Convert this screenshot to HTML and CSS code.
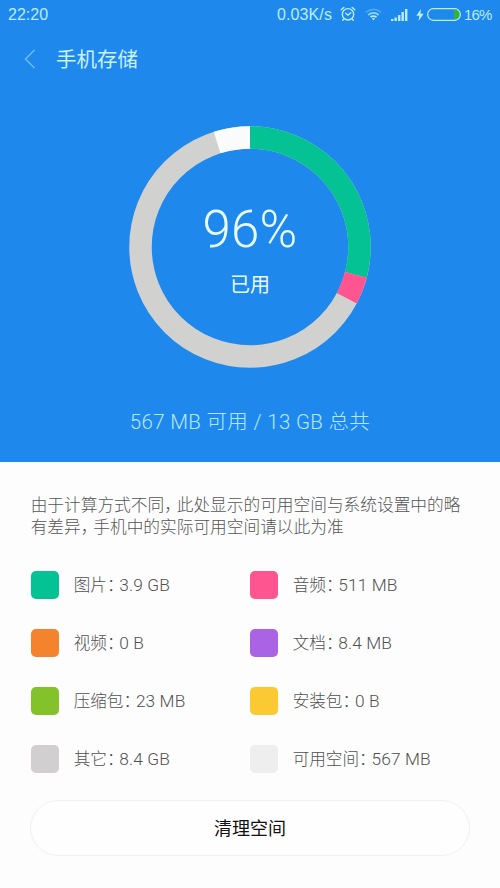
FILE: index.html
```html
<!DOCTYPE html>
<html lang="zh-CN">
<head>
<meta charset="utf-8">
<title>手机存储</title>
<link rel="stylesheet" href="styles.css">
</head>
<body>
<section class="hero">
  <div class="status">
    <span class="time">22:20</span>
    <span class="speed">0.03K/s</span>
    <svg class="alarm" width="16" height="16" viewBox="0 0 16 16" fill="none" stroke="currentColor" stroke-width="1.4" stroke-linecap="round"><circle cx="8" cy="8.3" r="5.7"/><path d="M1.2 3.7 3.8 1.5M14.8 3.7 12.2 1.5M5.7 7.2 8 9.2 10.8 6.8M3.9 12.9 2.8 14.2M12.1 12.9l1.1 1.3"/></svg>
    <svg class="wifi" width="17" height="13" viewBox="0 0 17 13" fill="none" stroke="currentColor" stroke-width="1.7"><path opacity=".3" d="M.8 4.4Q8.500-1.800 16.200 4.400"/><path opacity=".75" d="M3.300 7Q8.500 2.700 13.700 7"/><path d="M5.500 9.200Q8.500 6.900 11.500 9.200"/><path d="M6.800 10.200h3.400L8.500 12.500z" fill="currentColor" stroke="none"/></svg>
    <svg class="signal" width="17" height="12" viewBox="0 0 17 12" fill="currentColor"><path d="M0 10h2.400v2H0zM3.500 8.500h2.400V12H3.500zM7 6h2.400v6H7zM10.500 3h2.400v9h-2.400zM14 0h2.400v12H14z"/></svg>
    <svg class="bolt" width="8" height="12" viewBox="0 0 8 12" fill="currentColor"><path d="M5 0 .3 6.700h3L2.500 12 7.700 4.800H4.500z"/></svg>
    <svg class="battery" width="34" height="13" viewBox="0 0 34 13"><path d="M27 1.500h1.500a4 5 0 0 1 0 10H27z" fill="#36b52c"/><rect x=".7" y=".7" width="32.600" height="11.600" rx="5.600" fill="none" stroke="currentColor" stroke-width="1.200"/></svg>
    <span class="percent">16%</span>
  </div>
  <header class="title">
    <svg width="12" height="20" viewBox="0 0 12 20" fill="none" stroke="#6fbcf5" stroke-width="1.500"><path d="M10.500 1 1.500 10l9 9"/></svg>
    <h1>手机存储</h1>
  </header>
  <div class="chart">
    <svg class="ring" width="242" height="242" viewBox="0 0 242 242" fill="none" stroke-width="22.500">
      <g transform="rotate(-90 121 121)">
        <circle cx="121" cy="121" r="109.500" stroke="#d1d1d0"/>
        <circle cx="121" cy="121" r="109.500" stroke="#05c295" pathLength="360" stroke-dasharray="104.800 255.200"/>
        <circle cx="121" cy="121" r="109.500" stroke="#fe5591" pathLength="360" stroke-dasharray="13.100 346.900" stroke-dashoffset="-104.800"/>
        <circle cx="121" cy="121" r="109.500" stroke="#fafcfb" pathLength="360" stroke-dasharray="17.500 342.500" stroke-dashoffset="-342.500"/>
      </g>
    </svg>
    <div class="used"><strong>96%</strong><span>已用</span></div>
  </div>
  <p class="summary">567 MB 可用 / 13 GB 总共</p>
</section>
<main>
  <p class="note">由于计算方式不同<i>，</i>此处显示的可用空间与系统设置中的略<br>有差异<i>，</i>手机中的实际可用空间请以此为准</p>
  <ul class="legend">
    <li><b class="pictures"></b><span>图片<i>：</i><em>3.9 GB</em></span></li>
    <li><b class="audio"></b><span>音频<i>：</i><em>511 MB</em></span></li>
    <li><b class="video"></b><span>视频<i>：</i><em>0 B</em></span></li>
    <li><b class="docs"></b><span>文档<i>：</i><em>8.4 MB</em></span></li>
    <li><b class="archives"></b><span>压缩包<i>：</i><em>23 MB</em></span></li>
    <li><b class="packages"></b><span>安装包<i>：</i><em>0 B</em></span></li>
    <li><b class="other"></b><span>其它<i>：</i><em>8.4 GB</em></span></li>
    <li><b class="free"></b><span>可用空间<i>：</i><em>567 MB</em></span></li>
  </ul>
  <button class="clean">清理空间</button>
</main>
</body>
</html>
```
FILE: styles.css
```css
* { box-sizing: border-box; margin: 0; padding: 0; }
body {
  width: 500px;
  height: 888px;
  overflow: hidden;
  background: #fdfdfd;
  font-family: Roboto, "Noto Sans CJK SC", sans-serif;
  font-weight: 300;
}
.hero { height: 462px; background: #1f88ec; color: #e8fbff; }
.status {
  display: flex;
  align-items: center;
  height: 29px;
  padding: 0 8px;
  color: #b9edff;
  font: 400 16px/29px "Liberation Sans", sans-serif;
}
.time { flex: 1; }
.speed { margin-right: 8px; letter-spacing: .1px; }
.alarm { margin-right: 9px; margin-top: -2px; }
.wifi { margin-right: 9px; }
.signal { margin-right: 8px; }
.bolt { margin-right: 3px; }
.battery { margin-right: 3px; margin-top: -1px; }
.percent { width: 28px; font-size: 15px; letter-spacing: -.9px; }
.title {
  display: flex;
  align-items: center;
  gap: 20px;
  height: 60px;
  padding-left: 24px;
}
.title h1 { padding-top: 2px; font-size: 20.5px; font-weight: 400; line-height: 30px; color: #c9f1ff; }
.chart { display: grid; justify-content: center; margin-top: 37px; height: 242px; }
.ring, .used { grid-area: 1 / 1; }
.used { display: flex; flex-direction: column; align-items: center; padding-top: 75px; }
.used strong { font-size: 51px; line-height: 58px; font-weight: 300; letter-spacing: .2px; }
.used span { margin-top: 11px; font-size: 20px; line-height: 30px; font-weight: 400; }
.summary { margin-top: 39px; text-align: center; font-size: 20.5px; line-height: 30px; letter-spacing: .32px; color: #b4e8ff; }
main { padding: 33px 30px 0; color: #555; }
main i { font-style: normal; letter-spacing: -.25em; }
.note { padding-left: .7px; font-size: 16.7px; line-height: 22px; white-space: nowrap; }
.legend {
  display: grid;
  grid-template-columns: 219px 1fr;
  grid-auto-rows: 28px;
  row-gap: 30.300px;
  margin: 31.500px 0 0 .7px;
  list-style: none;
  font-size: 16.600px;
  color: #505050;
}
.legend li { display: flex; align-items: center; gap: 15px; white-space: nowrap; }
.legend span { padding-bottom: 2px; }
.legend em { font-style: normal; font-size: 17.300px; letter-spacing: .1px; }
.legend b { width: 28px; height: 28px; border-radius: 5px; }
.pictures { background: #05c295; }
.audio { background: #fe5591; }
.video { background: #f3832c; }
.docs { background: #ab63e5; }
.archives { background: #84c22b; }
.packages { background: #fbc932; }
.other { background: #d1cfd0; }
.free { background: #eee; }
.clean {
  display: block;
  width: 440px;
  height: 56px;
  margin-top: 27px;
  padding-top: 2px;
  border: 1px solid #f4eff0;
  border-radius: 28px;
  background: #fefefe;
  color: #111;
  font: 400 18px/28px Roboto, "Noto Sans CJK SC", sans-serif;
}
```
